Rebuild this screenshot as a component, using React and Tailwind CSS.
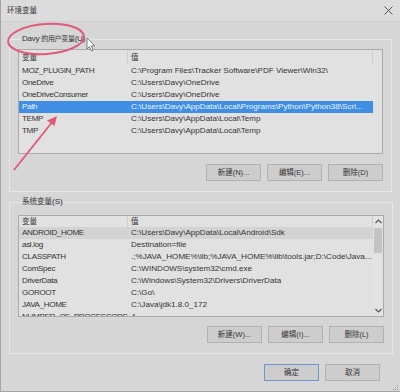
import React from "react";

const userVars = [
  ["MOZ_PLUGIN_PATH", "C:\\Program Files\\Tracker Software\\PDF Viewer\\Win32\\"],
  ["OneDrive", "C:\\Users\\Davy\\OneDrive"],
  ["OneDriveConsumer", "C:\\Users\\Davy\\OneDrive"],
  ["Path", "C:\\Users\\Davy\\AppData\\Local\\Programs\\Python\\Python38\\Scri..."],
  ["TEMP", "C:\\Users\\Davy\\AppData\\Local\\Temp"],
  ["TMP", "C:\\Users\\Davy\\AppData\\Local\\Temp"],
];

const sysVars = [
  ["ANDROID_HOME", "C:\\Users\\Davy\\AppData\\Local\\Android\\Sdk"],
  ["asl.log", "Destination=file"],
  ["CLASSPATH", ".;%JAVA_HOME%\\lib;%JAVA_HOME%\\lib\\tools.jar;D:\\Code\\Java..."],
  ["ComSpec", "C:\\WINDOWS\\system32\\cmd.exe"],
  ["DriverData", "C:\\Windows\\System32\\Drivers\\DriverData"],
  ["GOROOT", "C:\\Go\\"],
  ["JAVA_HOME", "C:\\Java\\jdk1.8.0_172"],
  ["NUMBER_OF_PROCESSORS", "4"],
];

const font = "font-['Liberation_Sans','Noto_Sans_CJK_SC',sans-serif]";

export default function App() {
  return (
    <div
      className={`relative w-[400px] h-[392px] overflow-hidden bg-[#d6d6d6] border-l border-b border-[#a4a4a4] text-[8.1px] text-[#343434] ${font}`}
    >
      {/* TITLE BAR */}
      <div className="h-[22px] flex items-center justify-between pl-[6px] pr-[7px] bg-[#dcdcdc] border-b border-[#d0d0d0]">
        <span className="text-[7.5px]">环境变量</span>
        <svg width="9" height="9" viewBox="0 0 9 9">
          <path d="M0.5 0.5 L8.5 8.5 M8.5 0.5 L0.5 8.5" stroke="#555" strokeWidth="1" />
        </svg>
      </div>

      {/* USER VARS */}
      <fieldset className="mx-2 mt-[11px] border border-[#e7e7e7] px-2 pb-[10px]">
        <legend className="ml-[3px] px-[1px] leading-[12px] tracking-[-0.3px]">
          Davy <span className="text-[7px]">的用户变量</span>(U)
        </legend>
        <div className="mt-[4px] h-[105px] border border-[#aaaaaa] bg-[#e1e1e1] overflow-hidden">
          <Header tall />
          {userVars.map(([k, v]) => (
            <Row key={k} name={k} value={v} selected={k === "Path"} />
          ))}
        </div>
        <div className="mt-[10px] flex justify-end gap-[6px]">
          <Btn>新建(N)...</Btn>
          <Btn>编辑(E)...</Btn>
          <Btn>删除(D)</Btn>
        </div>
      </fieldset>

      {/* SYSTEM VARS */}
      <fieldset className="mx-2 mt-[4px] border border-[#e7e7e7] px-2 pb-[10px]">
        <legend className="ml-[3px] px-[1px] leading-[12px]">
          <span className="text-[7.5px]">系统变量</span>(S)
        </legend>
        <div className="mt-[7px] h-[102px] border border-[#aaaaaa] bg-[#e1e1e1] overflow-hidden flex">
          <div className="flex-1 overflow-hidden">
            <Header />
            {sysVars.map(([k, v]) => (
              <Row key={k} name={k} value={v} hover={k === "ANDROID_HOME"} />
            ))}
          </div>
          <div className="w-[10px] flex flex-col items-center bg-[#e3e3e3]">
            <svg width="7" height="5" viewBox="0 0 7 5" className="mt-[3px]">
              <path d="M0.5 4 L3.5 1 L6.5 4" stroke="#555" strokeWidth="1.2" fill="none" />
            </svg>
            <div className="mt-[4px] w-[8px] h-[25px] bg-[#c3c3c3]" />
            <div className="flex-1" />
            <svg width="7" height="5" viewBox="0 0 7 5" className="mb-[3px]">
              <path d="M0.5 1 L3.5 4 L6.5 1" stroke="#555" strokeWidth="1.2" fill="none" />
            </svg>
          </div>
        </div>
        <div className="mt-[9px] flex justify-end gap-[6px]">
          <Btn>新建(W)...</Btn>
          <Btn>编辑(I)...</Btn>
          <Btn>删除(L)</Btn>
        </div>
      </fieldset>

      {/* OK / CANCEL */}
      <div className="mt-[10px] flex justify-end gap-[6px] pr-[20px]">
        <Btn primary>确定</Btn>
        <Btn>取消</Btn>
      </div>

      {/* ANNOTATIONS */}
      <svg className="absolute inset-0 pointer-events-none" width="400" height="392">
        <ellipse
          cx="45"
          cy="39"
          rx="38"
          ry="15"
          transform="rotate(-4 45 39)"
          fill="none"
          stroke="#e0587a"
          strokeWidth="2"
        />
        <line x1="13" y1="170" x2="52" y2="121" stroke="#e0587a" strokeWidth="1.8" />
        <path d="M56 116 L53.5 126 L46 120.5 Z" fill="#e0587a" />
        <path
          d="M86 38 L86 49 L88.5 46.5 L90.5 51 L92.2 50.2 L90.3 45.8 L93.8 45.8 Z"
          fill="#fafafa"
          stroke="#666"
          strokeWidth="0.8"
        />
        <g fill="#9a9a9a">
          <rect x="396" y="385" width="1" height="1" />
          <rect x="394" y="387" width="1" height="1" />
          <rect x="396" y="387" width="1" height="1" />
          <rect x="392" y="389" width="1" height="1" />
          <rect x="394" y="389" width="1" height="1" />
          <rect x="396" y="389" width="1" height="1" />
        </g>
      </svg>
    </div>
  );
}

const Header = ({ tall }) => (
  <div className={`flex ${tall ? "h-[15px]" : "h-[11px]"} items-center text-[7.5px]`}>
    <div className="w-[109px] h-full flex items-center pl-[3px] border-r border-[#cfcfcf]">变量</div>
    <div className="w-[245px] h-full flex items-center pl-[3px] border-r border-[#cfcfcf]">值</div>
  </div>
);

const Row = ({ name, value, selected, hover }) => (
  <div
    className={`flex w-[354px] h-[12px] items-center whitespace-nowrap overflow-hidden ${
      selected ? "bg-[#3f8ee4] text-[#eef4ff]" : hover ? "bg-[#d3d3d3]" : ""
    }`}
  >
    <div className="w-[109px] shrink-0 pl-[3px] overflow-hidden tracking-[-0.35px]">{name}</div>
    <div className="flex-1 pl-[3px] overflow-hidden">{value}</div>
  </div>
);

const Btn = ({ children, primary }) => (
  <button
    className={`w-[55px] h-[17px] flex items-center justify-center bg-[#cdcdcd] text-[7.5px] border ${
      primary ? "border-[#6f95d0]" : "border-[#b1b1b1]"
    }`}
  >
    {children}
  </button>
);
